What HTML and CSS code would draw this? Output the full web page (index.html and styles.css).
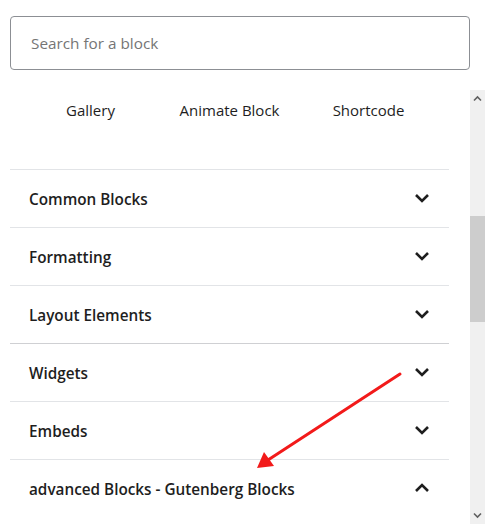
FILE: index.html
```html
<!DOCTYPE html>
<html>
<head>
<meta charset="utf-8">
<link rel="stylesheet" href="styles.css">
</head>
<body>
<div class="app">
  <div class="search-wrap">
    <div class="search">Search for a block</div>
  </div>
  <div class="scroller">
    <div class="content">
      <div class="tabs">
        <div class="tab">Gallery</div>
        <div class="tab">Animate Block</div>
        <div class="tab">Shortcode</div>
      </div>
      <div class="panels">
        <div class="panel"><span>Common Blocks</span><svg class="chev" viewBox="0 0 16 10"><path d="M2 2 L8 8 L14 2"/></svg></div>
        <div class="panel"><span>Formatting</span><svg class="chev" viewBox="0 0 16 10"><path d="M2 2 L8 8 L14 2"/></svg></div>
        <div class="panel"><span>Layout Elements</span><svg class="chev" viewBox="0 0 16 10"><path d="M2 2 L8 8 L14 2"/></svg></div>
        <div class="panel dark"><span>Widgets</span><svg class="chev" viewBox="0 0 16 10"><path d="M2 2 L8 8 L14 2"/></svg></div>
        <div class="panel"><span>Embeds</span><svg class="chev" viewBox="0 0 16 10"><path d="M2 2 L8 8 L14 2"/></svg></div>
        <div class="panel"><span>advanced Blocks - Gutenberg Blocks</span><svg class="chev" viewBox="0 0 16 10"><path d="M2 8 L8 2 L14 8"/></svg></div>
      </div>
    </div>
    <div class="scrollbar">
      <svg class="sb-arrow" viewBox="0 0 15 12"><path d="M4 8 L7.5 4.5 L11 8"/></svg>
      <div class="sb-track-top"></div>
      <div class="sb-thumb"></div>
      <div class="sb-track-bottom"></div>
      <svg class="sb-arrow" viewBox="0 0 15 12"><path d="M4 4 L7.5 7.5 L11 4"/></svg>
    </div>
  </div>
  <svg class="annot" width="485" height="524" viewBox="0 0 485 524">
    <line x1="400" y1="374" x2="268" y2="460" stroke="#f21a1a" stroke-width="3" stroke-linecap="round"/>
    <polygon points="257,468 264,452 274,466" fill="#f21a1a"/>
  </svg>
</div>
</body>
</html>
```

FILE: styles.css
```css
html, body {
  margin: 0;
  padding: 0;
  background: #fff;
}
body {
  font-family: "Open Sans", "Noto Sans", sans-serif;
  color: #1e1e1e;
}
.app {
  position: relative;
  width: 485px;
  height: 524px;
  overflow: hidden;
}
.search-wrap {
  height: 90px;
  padding: 16px 15px 0 10px;
  box-sizing: border-box;
}
.search {
  height: 54px;
  box-sizing: border-box;
  border: 1px solid #8c8f94;
  border-radius: 4px;
  padding-left: 20px;
  display: flex;
  align-items: center;
  font-size: 15.3px;
  color: #757575;
}
.scroller {
  display: flex;
  height: 434px;
}
.content {
  width: 470px;
  padding: 0 21px 0 10px;
  box-sizing: border-box;
}
.tabs {
  display: grid;
  grid-template-columns: 139px 139px 139px;
  justify-content: center;
  height: 79px;
  padding-top: 9px;
  box-sizing: border-box;
}
.tab {
  text-align: center;
  font-size: 15px;
  line-height: 22px;
  color: #1e1e1e;
}
.panel {
  height: 58px;
  box-sizing: border-box;
  border-top: 1px solid #e2e4e7;
  display: flex;
  align-items: center;
  justify-content: space-between;
  padding: 0 19px 0 19px;
  font-size: 15.3px;
  font-weight: 600;
}
.panel span {
  padding-top: 1px;
}
.panel.dark {
  border-top: 1px solid #cfd0d3;
}
.chev {
  width: 16px;
  height: 10px;
  margin-bottom: 2px;
}
.chev path {
  fill: none;
  stroke: #1e1e1e;
  stroke-width: 2.6;
}
.scrollbar {
  width: 15px;
  background: #f0f0f0;
  display: flex;
  flex-direction: column;
}
.sb-arrow {
  width: 15px;
  height: 17px;
  flex: none;
}
.sb-arrow path {
  fill: none;
  stroke: #606060;
  stroke-width: 1.6;
}
.sb-track-top {
  height: 109px;
  flex: none;
}
.sb-thumb {
  height: 106px;
  background: #cdcdcd;
  flex: none;
}
.sb-track-bottom {
  flex: 1;
}
.annot {
  position: absolute;
  left: 0;
  top: 0;
  pointer-events: none;
}
```
